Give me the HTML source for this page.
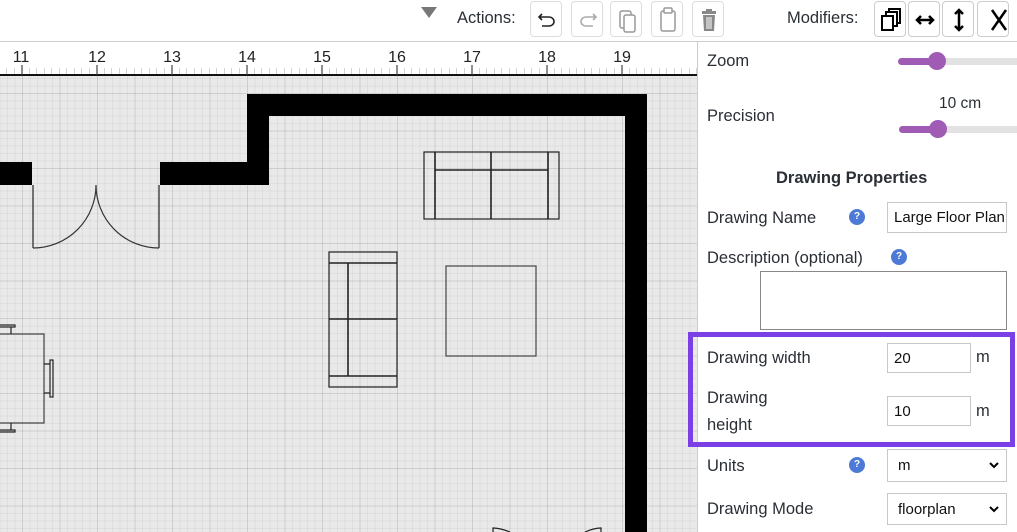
<!DOCTYPE html>
<html><head><meta charset="utf-8">
<style>
*{box-sizing:border-box;margin:0;padding:0}
body{width:1017px;height:532px;overflow:hidden;background:#fff;font-family:"Liberation Sans",sans-serif;color:#222;position:relative}
.a{position:absolute}
.btn{position:absolute;top:1px;width:32px;height:36px;border:1px solid #ddd;border-radius:4px;background:#fff}
.t{position:absolute;font-size:16.5px;color:#2a2f36;white-space:nowrap}
.inp{position:absolute;border:1px solid #c8c8c8;background:#fff;font-size:15px;color:#111;padding-left:6px;display:flex;align-items:center;overflow:hidden;white-space:nowrap}
.help{position:absolute;width:16px;height:16px;border-radius:50%;background:#4d7ad6;color:#fff;font-size:10px;font-weight:bold;text-align:center;line-height:16px}
.track{position:absolute;height:7px;border-radius:4px;background:#e2e2e2}
.fill{position:absolute;height:7px;border-radius:4px;background:#a05cb5}
.thumb{position:absolute;width:18px;height:18px;border-radius:50%;background:#a05cb5}
.lbl{position:absolute;top:49px;font-size:16px;color:#222;transform:translateX(-50%)}
</style></head><body>
<!-- toolbar -->
<div class="a" style="left:421px;top:7px;width:0;height:0;border-left:8px solid transparent;border-right:8px solid transparent;border-top:11px solid #777"></div>
<div class="t" style="left:457px;top:9px">Actions:</div>
<div class="btn" style="left:530px"><svg width="32" height="36"><path d="M11 12 L8 15 L11 18 M8 15 H18 a5 4.5 0 0 1 0 9 H11" fill="none" stroke="#222" stroke-width="1.6"/></svg></div>
<div class="btn" style="left:571px"><svg width="32" height="36"><path d="M21 12 L24 15 L21 18 M24 15 H14 a5 4.5 0 0 0 0 9 H21" fill="none" stroke="#aaa" stroke-width="1.6"/></svg></div>
<div class="btn" style="left:610px"><svg width="32" height="36"><rect x="9" y="9" width="11" height="17" rx="2" fill="none" stroke="#999" stroke-width="1.5"/><rect x="13" y="13" width="11" height="17" rx="2" fill="#fff" stroke="#999" stroke-width="1.5"/></svg></div>
<div class="btn" style="left:651px"><svg width="32" height="36"><rect x="9" y="9" width="14" height="20" rx="2" fill="none" stroke="#999" stroke-width="1.5"/><rect x="12" y="6" width="8" height="5" rx="1" fill="#fff" stroke="#999" stroke-width="1.5"/></svg></div>
<div class="btn" style="left:692px"><svg width="32" height="36"><rect x="9" y="9" width="14" height="3" fill="#888"/><rect x="13" y="7" width="6" height="3" fill="#888"/><path d="M10 13 H22 L21 29 H11 Z" fill="#888"/><path d="M14 15 V27 M16 15 V27 M18 15 V27" stroke="#fff" stroke-width="1"/></svg></div>
<div class="t" style="left:787px;top:9px">Modifiers:</div>
<div class="btn" style="left:874px;border-color:#ccc"><svg width="32" height="36"><rect x="14" y="7" width="11" height="14" fill="#fff" stroke="#000" stroke-width="2"/><rect x="11" y="10" width="11" height="14" fill="#fff" stroke="#000" stroke-width="2"/><rect x="7" y="14" width="11" height="14" fill="#fff" stroke="#000" stroke-width="2"/></svg></div>
<div class="btn" style="left:908px;border-color:#ccc"><svg width="32" height="36"><path d="M8 18 H24 M12 14 L8 18 L12 22 M20 14 L24 18 L20 22" fill="none" stroke="#000" stroke-width="2.5"/></svg></div>
<div class="btn" style="left:942px;border-color:#ccc"><svg width="32" height="36"><path d="M16 8 V28 M12 12 L16 8 L20 12 M12 24 L16 28 L20 24" fill="none" stroke="#000" stroke-width="2.5"/></svg></div>
<div class="btn" style="left:977px;border-color:#ccc"><svg width="40" height="36"><path d="M14 8 L28 28 M28 8 L14 28" stroke="#000" stroke-width="2.5"/></svg></div>
<div class="a" style="left:0;top:41px;width:1017px;height:1px;background:#ccc"></div>
<!-- ruler -->
<div class="a" style="left:0;top:68px;width:697px;height:7px;background:repeating-linear-gradient(90deg,transparent 0 7px,#aaa 7px 8px);background-size:7.5px 7px;background-position:7px 0"></div>
<div class="a" style="left:0;top:74px;width:697px;height:2px;background:#111"></div>
<svg class="a" style="left:0;top:60px" width="697" height="16">
<g stroke="#444" stroke-width="1.2">
<line x1="22" y1="5" x2="22" y2="15"/><line x1="97" y1="5" x2="97" y2="15"/><line x1="172" y1="5" x2="172" y2="15"/><line x1="247" y1="5" x2="247" y2="15"/><line x1="322" y1="5" x2="322" y2="15"/><line x1="397" y1="5" x2="397" y2="15"/><line x1="472" y1="5" x2="472" y2="15"/><line x1="547" y1="5" x2="547" y2="15"/><line x1="622" y1="5" x2="622" y2="15"/>
</g></svg>
<div class="lbl" style="left:21px">11</div><div class="lbl" style="left:97px">12</div><div class="lbl" style="left:172px">13</div><div class="lbl" style="left:247px">14</div><div class="lbl" style="left:322px">15</div><div class="lbl" style="left:397px">16</div><div class="lbl" style="left:472px">17</div><div class="lbl" style="left:547px">18</div><div class="lbl" style="left:622px">19</div>
<!-- canvas -->
<div class="a" style="left:0;top:76px;width:697px;height:456px;background-color:#e9e9e9;
background-image:linear-gradient(90deg,rgba(0,0,0,.08) 1px,transparent 1px),linear-gradient(0deg,rgba(0,0,0,.08) 1px,transparent 1px),linear-gradient(90deg,rgba(0,0,0,.045) 1px,transparent 1px),linear-gradient(0deg,rgba(0,0,0,.045) 1px,transparent 1px);
background-size:37.5px 37.5px,37.5px 37.5px,7.5px 7.5px,7.5px 7.5px;background-position:22px 18px,22px 18px,7px 3px,7px 3px"></div>
<svg class="a" style="left:0;top:0" width="697" height="532">
<g fill="#000">
<rect x="247" y="94" width="400" height="22"/>
<rect x="625" y="94" width="22" height="438"/>
<rect x="247" y="94" width="22" height="91"/>
<rect x="160" y="162" width="109" height="23"/>
<rect x="0" y="162" width="32" height="23"/>
</g>
<g fill="none" stroke="#222" stroke-width="1.2">
<path d="M33 185 V248 M159 185 V248"/>
<path d="M96 185 A63 63 0 0 1 33 248 M96 185 A63 63 0 0 0 159 248" stroke="#333"/>
<rect x="424" y="152" width="135" height="67"/>
<path d="M435 152 V219 M548 152 V219 M491 152 V219 M435 170 H548" stroke-width="1.6"/>
<rect x="446" y="266" width="90" height="90" stroke="#444"/>
<rect x="329" y="252" width="68" height="135"/>
<path d="M329 263 H397 M329 319 H397 M329 376 H397 M348 263 V376" stroke-width="1.6"/>
<path d="M0 334 H44 V423 H0" stroke="#444"/>
<rect x="50" y="360" width="3" height="37"/>
<path d="M44 364 H50 M44 393 H50 M11 327 V334 M11 423 V430"/>
<rect x="-2" y="325" width="17" height="2"/>
<rect x="-2" y="430" width="17" height="2"/>
<path d="M493 532 V528 Q500 528 510 532 M601 532 V528 Q594 528 585 532"/>
</g>
</svg>
<div class="a" style="left:697px;top:42px;width:1px;height:490px;background:#ccc"></div>
<!-- panel -->
<div class="t" style="left:707px;top:52px">Zoom</div>
<div class="track" style="left:898px;top:58px;width:130px"></div><div class="fill" style="left:898px;top:58px;width:40px"></div><div class="thumb" style="left:928px;top:52px"></div>
<div class="t" style="left:939px;top:95px;font-size:15.5px">10 cm</div>
<div class="t" style="left:707px;top:107px">Precision</div>
<div class="track" style="left:899px;top:126px;width:130px"></div><div class="fill" style="left:899px;top:126px;width:40px"></div><div class="thumb" style="left:929px;top:120px"></div>
<div class="t" style="left:776px;top:169px;font-weight:bold">Drawing Properties</div>
<div class="t" style="left:707px;top:209px">Drawing Name</div>
<div class="help" style="left:849px;top:209px">?</div>
<div class="inp" style="left:887px;top:202px;width:120px;height:31px">Large Floor Plan</div>
<div class="t" style="left:707px;top:249px">Description (optional)</div>
<div class="help" style="left:891px;top:249px">?</div>
<div class="inp" style="left:760px;top:271px;width:247px;height:59px;border-color:#888"></div>
<div class="a" style="left:688px;top:332px;width:327px;height:115px;border:5px solid #7b3fe6"></div>
<div class="t" style="left:707px;top:349px">Drawing width</div>
<div class="inp" style="left:887px;top:343px;width:84px;height:30px">20</div>
<div class="t" style="left:976px;top:348px">m</div>
<div class="t" style="left:707px;top:389px">Drawing</div>
<div class="t" style="left:707px;top:416px">height</div>
<div class="inp" style="left:887px;top:396px;width:84px;height:30px">10</div>
<div class="t" style="left:976px;top:402px">m</div>
<div class="t" style="left:707px;top:457px">Units</div>
<div class="help" style="left:849px;top:457px">?</div>
<div class="inp" style="left:887px;top:449px;width:120px;height:33px;padding-left:10px">m</div>
<div class="t" style="left:707px;top:500px">Drawing Mode</div>
<div class="inp" style="left:887px;top:493px;width:120px;height:32px;padding-left:10px">floorplan</div>
<svg class="a" style="left:988px;top:460px" width="14" height="60"><path d="M2 3 L6 7 L10 3 M2 47 L6 51 L10 47" fill="none" stroke="#000" stroke-width="2"/></svg>
</body></html>
